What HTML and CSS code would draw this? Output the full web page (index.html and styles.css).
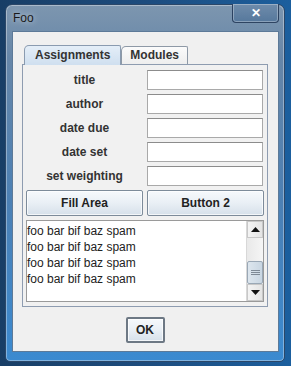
FILE: index.html
```html
<!DOCTYPE html>
<html lang="en">
  <head>
    <meta charset="UTF-8" />
    <meta name="viewport" content="width=device-width, initial-scale=1.0" />
    <title>Foo</title>
    <link rel="stylesheet" href="styles.css">
  </head>
  <body>
    <div class="window">
      <div class="titlebar">
        <span class="title">Foo</span>
        <div class="close">&#x2715;</div>
      </div>
      <div class="client">
        <div class="tabs">
          <div class="tab active">Assignments</div>
          <div class="tab">Modules</div>
        </div>
        <div class="panel">
          <div class="form">
            <label class="label">title</label>
            <div class="field"></div>
            <label class="label">author</label>
            <div class="field"></div>
            <label class="label">date due</label>
            <div class="field"></div>
            <label class="label">date set</label>
            <div class="field"></div>
            <label class="label">set weighting</label>
            <div class="field"></div>
          </div>
          <div class="buttons">
            <button class="btn">Fill Area</button>
            <button class="btn">Button 2</button>
          </div>
          <div class="area">
            <div class="lines">
              <div>foo bar bif baz spam</div>
              <div>foo bar bif baz spam</div>
              <div>foo bar bif baz spam</div>
              <div>foo bar bif baz spam</div>
            </div>
            <div class="scrollbar">
              <div class="arrow">
                <svg width="9" height="5" viewBox="0 0 9 5"><path d="M0 5 L4.5 0 L9 5 Z" fill="#111"/></svg>
              </div>
              <div class="track"></div>
              <div class="thumb">
                <svg width="9" height="6" viewBox="0 0 9 6"><path d="M0 0.5 H9 M0 2.5 H9 M0 4.5 H9" stroke="#7f8a96" stroke-width="1"/></svg>
              </div>
              <div class="arrow">
                <svg width="9" height="5" viewBox="0 0 9 5"><path d="M0 0 L4.5 5 L9 0 Z" fill="#111"/></svg>
              </div>
            </div>
          </div>
        </div>
        <div class="footer">
          <button class="btn ok">OK</button>
        </div>
      </div>
    </div>
  </body>
</html>
```

FILE: styles.css
```css
body {
  margin: 0;
  width: 291px;
  height: 366px;
  background: linear-gradient(90deg, #183e66, #1d4c7e 50%, #1b5f9e);
  font-family: "Liberation Sans", Arial, sans-serif;
  overflow: hidden;
}

.window {
  box-sizing: border-box;
  width: 280px;
  height: 358px;
  margin: 4px 0 0 5px;
  padding: 0 5px 9px 6px;
  border: 1px solid #2b4768;
  border-radius: 7px 7px 5px 5px;
  background: linear-gradient(180deg, #7d96af 0%, #6686a8 15%, #4c80b4 55%, #3b8ad0 100%);
  box-shadow: inset 0 0 0 1px rgba(255, 255, 255, 0.35);
  display: flex;
  flex-direction: column;
}

.titlebar {
  height: 26px;
  display: flex;
  justify-content: space-between;
  align-items: flex-start;
}

.title {
  margin: 6px 0 0 1px;
  font-size: 12px;
  color: #1a1a1a;
  text-shadow: 0 0 6px rgba(255, 255, 255, 0.7);
}

.close {
  width: 45px;
  height: 18px;
  margin: -1px 0 0 0;
  border: 1px solid rgba(30, 50, 80, 0.8);
  border-top: none;
  border-radius: 0 0 4px 4px;
  background: linear-gradient(180deg, #6f8cab, #56789c);
  box-shadow: inset 0 0 0 1px rgba(255, 255, 255, 0.3);
  color: #fff;
  font-size: 12px;
  font-weight: bold;
  text-align: center;
  line-height: 19px;
}

.client {
  flex: 1;
  background: #f0f0f0;
  border: 1px solid #5d7a98;
  display: flex;
  flex-direction: column;
  padding: 13px 10px 0 9px;
}

.tabs {
  display: flex;
  height: 19px;
  padding-left: 2px;
  align-items: flex-end;
}

.tab {
  box-sizing: border-box;
  height: 18px;
  padding: 0 8px;
  border: 1px solid #8e99a6;
  border-bottom: none;
  border-radius: 5px 2px 0 0;
  background: linear-gradient(180deg, #fbfbfb, #eeeeee);
  font-size: 12px;
  font-weight: bold;
  color: #333;
  line-height: 17px;
}

.tab.active {
  height: 20px;
  padding: 0 10px;
  background: linear-gradient(180deg, #e4eef8, #cfdfef);
  border-color: #8a9bb0;
  margin-bottom: -1px;
  line-height: 19px;
  position: relative;
}

.panel {
  flex: 0 0 243px;
  box-sizing: border-box;
  border: 1px solid #8e9cb0;
  background: #f1f1f1;
  padding: 5px 4px 4px 3px;
  display: flex;
  flex-direction: column;
  gap: 4px;
}

.form {
  display: grid;
  grid-template-columns: 117px 116px;
  grid-auto-rows: 20px;
  column-gap: 4px;
  row-gap: 4px;
}

.label {
  font-size: 12px;
  font-weight: bold;
  color: #333;
  text-align: center;
  line-height: 20px;
}

.field {
  box-sizing: border-box;
  background: #fff;
  border: 1px solid #a9a9a9;
  border-top-color: #8c8c8c;
}

.buttons {
  display: grid;
  grid-template-columns: 117px 117px;
  gap: 4px;
}

.btn {
  height: 26px;
  border: 1px solid #7d8b9a;
  border-radius: 2px;
  background: linear-gradient(180deg, #f6f9fc 0%, #e9eff5 50%, #d6e0ea 100%);
  box-shadow: inset 0 0 0 1px rgba(255, 255, 255, 0.7);
  font-family: "Liberation Sans", Arial, sans-serif;
  font-size: 12px;
  font-weight: bold;
  color: #222;
  padding: 0;
}

.area {
  height: 82px;
  width: 238px;
  box-sizing: border-box;
  border: 1px solid #9a9a9a;
  background: #fff;
  display: flex;
}

.lines {
  flex: 1;
  font-size: 12px;
  line-height: 16px;
  color: #222;
  padding: 2px 0 0 0;
}

.scrollbar {
  width: 16px;
  display: flex;
  flex-direction: column;
  border-left: 1px solid #d8d8d8;
  background: #ededed;
}

.arrow {
  height: 15px;
  display: flex;
  justify-content: center;
  align-items: center;
  background: linear-gradient(90deg, #f4f4f4, #e4e4e4);
  border: 1px solid #c8c8c8;
}

.track {
  flex: 1;
  background: linear-gradient(90deg, #e9e9e9, #f5f5f5);
}

.thumb {
  height: 21px;
  display: flex;
  justify-content: center;
  align-items: center;
  background: linear-gradient(90deg, #dde6ee, #c9d6e2);
  border: 1px solid #9aa8b6;
  border-radius: 2px;
}

.footer {
  display: flex;
  justify-content: center;
  padding-top: 10px;
}

.ok {
  width: 39px;
  border: 2px solid #6d7884;
}
```
